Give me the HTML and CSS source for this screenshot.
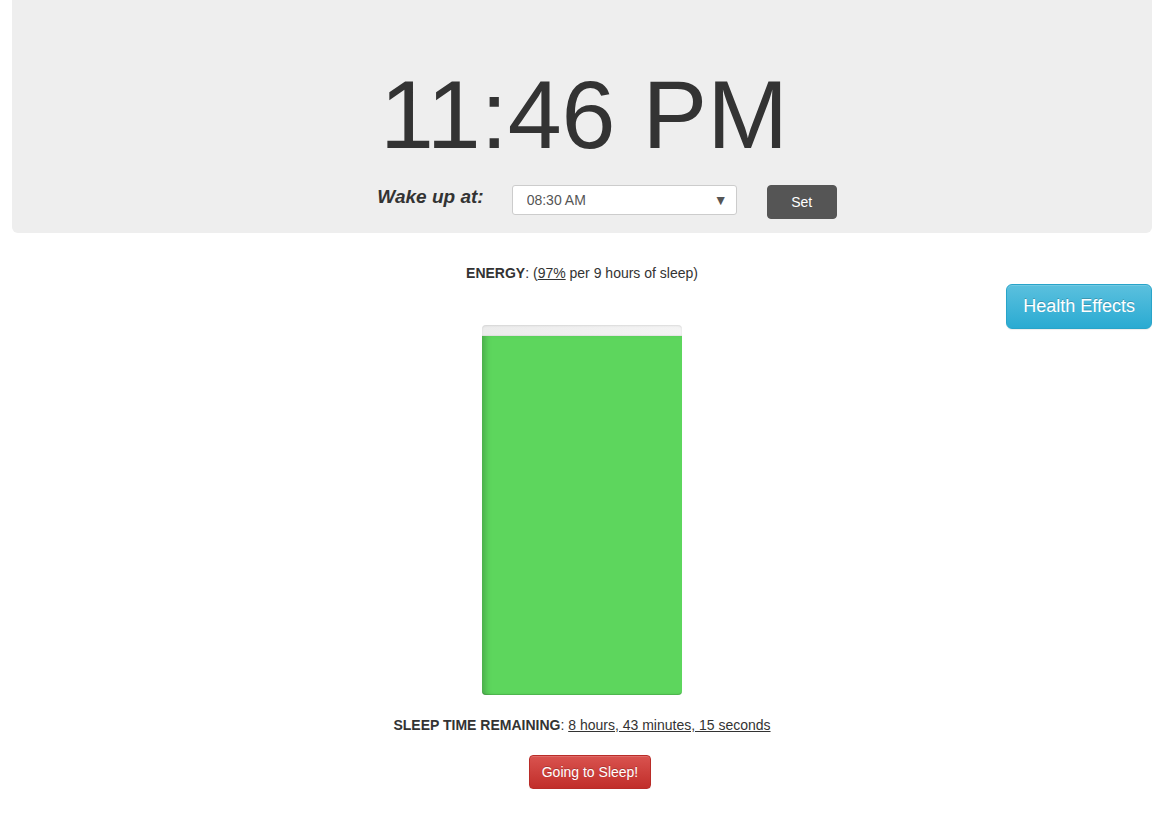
FILE: index.html
```html
<!DOCTYPE html>
<html lang="en">
<head>
<meta charset="utf-8">
<title>Sleep Calculator</title>
<link rel="stylesheet" href="styles.css">
</head>
<body>
<div class="page">
  <div class="jumbotron">
    <h1 class="clock">11:46 PM</h1>
    <div class="wake-row">
      <span class="wake-label">Wake up at:</span>
      <div class="select-wrap">
        <select class="wake-select">
          <option>08:30 AM</option>
        </select>
      </div>
      <button class="btn btn-set">Set</button>
    </div>
  </div>

  <p class="energy"><strong>ENERGY</strong>: (<a class="link" href="#">97%</a> per 9 hours of sleep)</p>
  <button class="btn btn-info">Health Effects</button>

  <div class="battery">
    <div class="battery-empty" style="height: 3%"></div>
    <div class="battery-fill" style="height: 97%"></div>
  </div>

  <p class="remaining"><strong>SLEEP TIME REMAINING</strong>: <a class="link" href="#">8 hours, 43 minutes, 15 seconds</a></p>
  <div class="action">
    <button class="btn btn-danger">Going to Sleep!</button>
  </div>
</div>
</body>
</html>
```

FILE: styles.css
```css
* { box-sizing: border-box; }

html, body {
  margin: 0;
  padding: 0;
  background: #fff;
}

body {
  font-family: "Liberation Sans", Arial, Helvetica, sans-serif;
  font-size: 14px;
  line-height: 20px;
  color: #333;
}

.page {
  margin-left: 12px;
  width: 1140px;
}

.jumbotron {
  background: #eee;
  border-radius: 0 0 6px 6px;
  padding: 61px 0 14px;
  text-align: center;
}

.clock {
  margin: 0;
  font-size: 97px;
  line-height: 108px;
  font-weight: normal;
  color: #333;
  padding-left: 4px;
}

.wake-row {
  display: flex;
  justify-content: center;
  align-items: flex-start;
  padding-left: 50px;
  margin-top: 16px;
  height: 34px;
}

.wake-label {
  font-size: 19px;
  line-height: 24px;
  font-weight: bold;
  font-style: italic;
  color: #333;
  margin-right: 28px;
}

.select-wrap {
  position: relative;
  width: 225px;
  height: 30px;
  margin-right: 30px;
}

.select-wrap::after {
  content: "\25BC";
  position: absolute;
  right: 9px;
  top: 7px;
  font-size: 14px;
  line-height: 16px;
  color: #555;
  pointer-events: none;
}

.wake-select {
  -webkit-appearance: none;
  appearance: none;
  width: 100%;
  height: 30px;
  border: 1px solid #ccc;
  border-radius: 3px;
  background: #fff;
  padding: 0 0 0 14px;
  font-family: "Liberation Sans", Arial, Helvetica, sans-serif;
  font-size: 14px;
  color: #555;
  outline: none;
}

.btn {
  display: inline-block;
  font-family: "Liberation Sans", Arial, Helvetica, sans-serif;
  font-size: 14px;
  line-height: 20px;
  padding: 6px 12px;
  border: 1px solid transparent;
  border-radius: 4px;
  color: #fff;
  cursor: pointer;
  text-align: center;
}

.btn-set {
  width: 70px;
  height: 34px;
  background: #555;
  border-color: #555;
  padding: 6px 0;
}

.energy {
  margin: 30px 0 0;
  text-align: center;
}

.link {
  color: #333;
  text-decoration: underline;
}

.btn-info {
  float: right;
  margin-top: 1px;
  font-size: 18px;
  line-height: 24px;
  padding: 9px 16px 10px;
  border-radius: 6px;
  background: linear-gradient(to bottom, #5bc0de 0%, #2aabd2 100%);
  border-color: #28a4c9;
  text-shadow: 0 -1px 0 rgba(0, 0, 0, .2);
  box-shadow: inset 0 1px 0 rgba(255, 255, 255, .15), 0 1px 1px rgba(0, 0, 0, .075);
}

.battery {
  width: 200px;
  height: 370px;
  margin: 42px auto 0;
  border-radius: 4px;
  background: linear-gradient(to right, #ececec 0%, #f4f4f4 100%);
  box-shadow: inset 0 1px 2px rgba(0, 0, 0, .1);
}

.battery-empty {
  width: 100%;
}

.battery-fill {
  width: 100%;
  background: #5dd65d;
  border-radius: 0 0 4px 4px;
  box-shadow: inset 7px 0 6px -4px rgba(0, 0, 0, .22), inset 0 -2px 1px -1px rgba(0, 0, 0, .15), 0 -1px 1px rgba(0, 0, 0, .06);
}

.remaining {
  margin: 20px 0 0;
  text-align: center;
}

.action {
  margin-top: 20px;
  padding-left: 16px;
  text-align: center;
}

.btn-danger {
  background: linear-gradient(to bottom, #d9534f 0%, #c12e2a 100%);
  border-color: #b92c28;
  text-shadow: 0 -1px 0 rgba(0, 0, 0, .2);
  box-shadow: inset 0 1px 0 rgba(255, 255, 255, .15), 0 1px 1px rgba(0, 0, 0, .075);
}
```
